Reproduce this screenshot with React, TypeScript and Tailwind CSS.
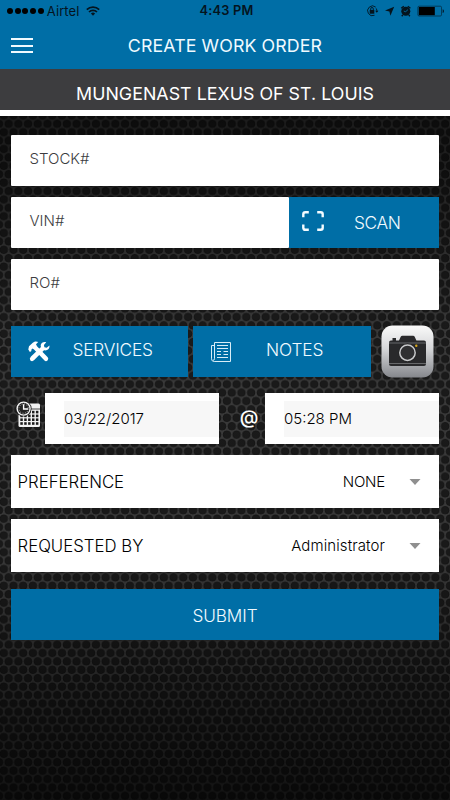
import type { ReactNode } from "react";

function Honeycomb() {
  return (
    <svg className="absolute inset-0 h-full w-full" aria-hidden="true">
      <defs>
        <pattern id="mesh" width="9.7" height="16.8" patternUnits="userSpaceOnUse" patternTransform="translate(3.8 2)">
          <rect width="9.7" height="16.8" fill="#3a3a3a" />
          <g fill="#1a1a1a" stroke="#101010" strokeWidth="0.7">
            <circle cx="4.85" cy="4.2" r="3.8" />
            <circle cx="0" cy="12.6" r="3.8" />
            <circle cx="9.7" cy="12.6" r="3.8" />
          </g>
        </pattern>
        <linearGradient id="shade" x1="0" y1="0" x2="0" y2="1">
          <stop offset="0" stopColor="#000" stopOpacity="0.65" />
          <stop offset="0.2" stopColor="#000" stopOpacity="0.48" />
          <stop offset="0.42" stopColor="#000" stopOpacity="0" />
          <stop offset="0.7" stopColor="#000" stopOpacity="0.05" />
          <stop offset="0.86" stopColor="#000" stopOpacity="0.42" />
          <stop offset="1" stopColor="#000" stopOpacity="0.68" />
        </linearGradient>
      </defs>
      <rect width="100%" height="100%" fill="url(#mesh)" />
      <rect width="100%" height="100%" fill="url(#shade)" />
    </svg>
  );
}

function WifiIcon() {
  return (
    <svg className="ml-[6px] h-[10px] w-[14px]" viewBox="0 0 14 10" fill="none" stroke="#04141e" strokeWidth="1.7">
      <path d="M.8 3.6a8.8 8.8 0 0 1 12.4 0M3 6a5.7 5.7 0 0 1 8 0" />
      <path d="M7 9.8 4.9 7.6a3 3 0 0 1 4.2 0z" fill="#04141e" stroke="none" />
    </svg>
  );
}

function StatusIcons() {
  return (
    <svg className="h-[14px] w-[80px]" viewBox="0 0 80 14" fill="none" stroke="#04141e">
      <path d="M9.7 3.1A4.9 4.9 0 1 0 8.5 11.3" strokeWidth="0.9" />
      <path d="M10.2 4.4a5 5 0 0 1 .6 3.6" strokeWidth="0.9" />
      <path d="m9.2 6.8 1.6 2 1.6-2z" fill="#04141e" stroke="none" />
      <rect x="3.7" y="6" width="4.6" height="3.7" fill="#04141e" stroke="none" />
      <path d="M4.7 6V4.8a1.3 1.3 0 0 1 2.6 0V6" strokeWidth="0.9" />
      <path d="m28.2 2.7-3.8 9-1-4.3-4.4-1z" fill="#04141e" stroke="none" />
      <circle cx="39.8" cy="7.3" r="4.5" fill="#04141e" stroke="none" />
      <path d="M35.2 4.3 37.8 2.3M44.4 4.3 41.8 2.3M36.8 10.9l-1 1.3M42.8 10.9l1 1.3" strokeWidth="1.4" />
      <path d="M42 5.6 39.7 7.7 37.8 7.1" stroke="#006ea6" strokeWidth="0.9" />
      <rect x="51.9" y="2.2" width="23.6" height="9.8" rx="1.2" strokeWidth="0.7" strokeOpacity="0.8" />
      <rect x="52.8" y="3" width="16" height="8.2" fill="#000" stroke="none" />
      <path d="M76.7 5.2c1.6.4 1.6 3.4 0 3.8z" fill="#04141e" stroke="none" />
    </svg>
  );
}

function ScanIcon() {
  return (
    <svg className="-mt-[3px] h-5 w-[22px]" viewBox="0 0 22 20" fill="none" stroke="#f4fbff" strokeWidth="2.4">
      <path d="M1.3 6.3V3.2q0-2 2-2h3.5M15.2 1.2h3.5q2 0 2 2v3.1M20.7 13.4v3.4q0 2-2 2h-3.5M6.8 18.8H3.3q-2 0-2-2v-3.4" />
    </svg>
  );
}

function ToolsIcon() {
  return (
    <svg className="h-[22px] w-[22px]" viewBox="0 0 22 22" fill="#fff">
      <path d="M.3 8.6 1 5.2 4.8 1.7C6.8.1 8.7.3 10.2 1L8 3.2l1 2L19.7 16.2q1.3 1.6-.2 3.2-1.5 1.4-3 .1L6 8.5 4.5 7.5 3.3 8.7l.1 1.4-1.5 1z" />
      <path d="m21.4 4.6-2.7 2.2-2.3-.6-.5-2.3L18.2 1.2c-2.6-.7-5 .5-5.4 2.6-.2.8-.1 1.5.2 2.2L3 15.6q-2.100 2-.6 3.8 1.800 1.700 3.800-.4L16 9.300c3.400.7 6-1.700 5.400-4.700z" />
    </svg>
  );
}

function NotesIcon() {
  return (
    <svg className="h-[20px] w-[20px]" viewBox="0 0 20 20" fill="none" stroke="#d9edf7" strokeWidth="1">
      <path d="M3.5.5h16v19H3.2a2.7 2.7 0 0 1-2.7-2.7V3.5h3M3.5.5v16.2q0 1.6-1.4 1.6" />
      <path d="M6 3.5h11M6 6.5h11M6 9.5h4M12.5 9.5H17M6 12.5h4M12.5 12.5H17M6 15.5h11" />
    </svg>
  );
}

function CalendarClockIcon() {
  return (
    <svg className="h-[26px] w-[25px]" viewBox="0 0 25 26">
      <rect x="2.5" y="2.5" width="21.5" height="23.5" rx="1.5" fill="#f2f2f2" />
      <path d="M3 8h21" stroke="#222" strokeWidth="0.8" />
      <g fill="#1b1b1b">
        {[9.8, 13.6, 17.4, 21.2].map((y) =>
          [4.3, 8.2, 12.1, 16, 19.9].map((x) => (
            <rect key={`${x}-${y}`} x={x} y={y} width="2.5" height="2.6" />
          ))
        )}
      </g>
      <circle cx="7.6" cy="7.6" r="8" fill="#1b1b1b" />
      <circle cx="7.6" cy="7.6" r="6.5" fill="#222" stroke="#f2f2f2" strokeWidth="1.4" />
      <path d="M7.6 3.3V8H12" fill="none" stroke="#fff" strokeWidth="1.4" />
      <circle cx="7.6" cy="7.6" r="4.7" fill="none" stroke="#ddd" strokeWidth="0.9" strokeDasharray="0.9 1.56" />
    </svg>
  );
}

function CameraIcon() {
  return (
    <svg className="h-[53px] w-[53px]" viewBox="0 0 53 53">
      <defs>
        <linearGradient id="tile" x1="0" y1="0" x2="0" y2="1">
          <stop offset="0" stopColor="#fafafa" />
          <stop offset="0.45" stopColor="#d5d6d8" />
          <stop offset="1" stopColor="#85878c" />
        </linearGradient>
      </defs>
      <rect x="0.5" y="0.5" width="52" height="52" rx="11" fill="url(#tile)" />
      <path d="M8 17.5q0-2 2-2h1.500v-2.500h3.500v2.500h3l1.700-3.700q.5-1 1.700-1h10.600q1.200 0 1.700 1l1.700 3.700H43q2 0 2 2V39q0 2-2 2H10q-2 0-2-2z" fill="#29292b" />
      <path d="M8 18h37M8 38.5h37" stroke="#77787b" strokeWidth="0.8" />
      <circle cx="26.5" cy="27.7" r="9.2" fill="#232324" />
      <circle cx="26.5" cy="27.7" r="7.7" fill="#303032" stroke="#c8c9cb" strokeWidth="1.5" />
      <circle cx="35.3" cy="20.7" r="1.2" fill="#d9a81c" />
    </svg>
  );
}

function Field({ placeholder, className = "" }: { placeholder: string; className?: string }) {
  return (
    <div className={`flex h-[51px] items-center rounded-[1px] bg-white pb-[2px] pl-[18.5px] text-[15px] font-light text-[#3c3c40] ${className}`}>
      {placeholder}
    </div>
  );
}

function ActionButton({
  icon,
  label,
  className = "",
  labelClass = "",
}: {
  icon: ReactNode;
  label: string;
  className?: string;
  labelClass?: string;
}) {
  return (
    <button className={`flex h-[51px] items-center bg-[#006ea6] text-[17.3px] font-[350] text-[#f0faff] ${className}`}>
      {icon}
      <span className={labelClass}>{label}</span>
    </button>
  );
}

function DateBox({ value }: { value: string }) {
  return (
    <div className="flex w-[174px] items-center bg-white pl-[19px]">
      <div className="flex h-[36px] flex-1 items-center bg-[#f7f7f7] pt-[2px] text-[15px] font-light text-black">
        {value}
      </div>
    </div>
  );
}

function SelectRow({ label, value, valueClass }: { label: string; value: string; valueClass: string }) {
  return (
    <div className="flex h-[53px] items-center bg-white pl-[6.5px] text-black">
      <span className="flex-1 pt-[2px] text-[16.8px] font-light">{label}</span>
      <span className={`pt-[1px] text-[15px] font-light ${valueClass}`}>{value}</span>
      <svg className="mr-[18px] ml-[24px] h-[6px] w-[12px]" viewBox="0 0 12 6" fill="#8f8f8f">
        <path d="M.5 0h11L6 6z" />
      </svg>
    </div>
  );
}

export default function App() {
  return (
    <div className="relative flex h-[800px] w-[450px] flex-col overflow-hidden bg-[#111] font-['Inter','Liberation_Sans',sans-serif] whitespace-nowrap">
      <Honeycomb />
      <header className="relative h-[69px] bg-[#006ea6]">
        <div className="flex h-[22px] items-center pr-[4px] pl-[7px] text-[#04141e]">
          <div className="flex flex-1 items-center">
            <div className="flex gap-[1.7px]">
              {[0, 1, 2, 3, 4].map((dot) => (
                <span key={dot} className="h-[6px] w-[6px] rounded-full bg-black" />
              ))}
            </div>
            <span className="ml-[3px] text-[13px] leading-[22px] tracking-[0.1px]">Airtel</span>
            <WifiIcon />
          </div>
          <span className="text-[12.8px] leading-[22px] font-semibold tracking-[0.2px]">4:43 PM</span>
          <div className="flex flex-1 justify-end">
            <StatusIcons />
          </div>
        </div>
        <div className="flex h-[47px] items-center pl-[11px]">
          <button className="flex w-[22px] flex-col gap-[4.5px]" aria-label="Menu">
            <span className="h-[2px] bg-[#f0faff]" />
            <span className="h-[2px] bg-[#f0faff]" />
            <span className="h-[2px] bg-[#f0faff]" />
          </button>
          <h1 className="flex-1 pt-[2px] pr-[33px] text-center text-[17.8px] tracking-[0.1px] text-[#f0faff]">
            CREATE WORK ORDER
          </h1>
        </div>
      </header>
      <div className="relative flex h-[41px] items-center justify-center bg-[#3d3d3f] pt-[9px] text-[17.8px] tracking-[0.04px] text-white">
        MUNGENAST LEXUS OF ST. LOUIS
      </div>
      <div className="relative h-[6px] bg-white" />

      <main className="relative flex flex-col px-[11px] pt-[19px]">
        <Field placeholder="STOCK#" />
        <div className="mt-[11px] flex">
          <Field placeholder="VIN#" className="w-[278px]" />
          <ActionButton icon={<ScanIcon />} label="SCAN" labelClass="pt-[1px] tracking-[-0.4px]" className="w-[150px] gap-[30px] pl-[13px]" />
        </div>
        <Field placeholder="RO#" className="mt-[11px]" />

        <div className="mt-[16px] flex h-[51px] items-center">
          <ActionButton icon={<ToolsIcon />} label="SERVICES" labelClass="pb-[4px] tracking-[-0.2px]" className="w-[177px] gap-[22.5px] pl-[17px]" />
          <ActionButton icon={<NotesIcon />} label="NOTES" labelClass="pb-[4px] tracking-[-0.1px]" className="ml-[5px] w-[178px] gap-[35px] pl-[18px]" />
          <div className="ml-[10px]">
            <CameraIcon />
          </div>
        </div>

        <div className="mt-[16px] flex h-[51px]">
          <div className="w-[34px] pt-[8px] pl-[5px]">
            <CalendarClockIcon />
          </div>
          <DateBox value="03/22/2017" />
          <div className="flex w-[46px] items-center justify-center pl-[14px] text-[19px] font-medium text-white">@</div>
          <DateBox value="05:28 PM" />
        </div>

        <div className="mt-[11px] flex flex-col gap-[11px]">
          <SelectRow label="PREFERENCE" value="NONE" valueClass="tracking-[-0.2px]" />
          <SelectRow label="REQUESTED BY" value="Administrator" valueClass="tracking-[0.1px]" />
        </div>
        <button className="mt-[17px] h-[51px] bg-[#006ea6] pt-[2px] text-[17.2px] font-[350] tracking-[-0.1px] text-[#f0faff]">
          SUBMIT
        </button>
      </main>
    </div>
  );
}
